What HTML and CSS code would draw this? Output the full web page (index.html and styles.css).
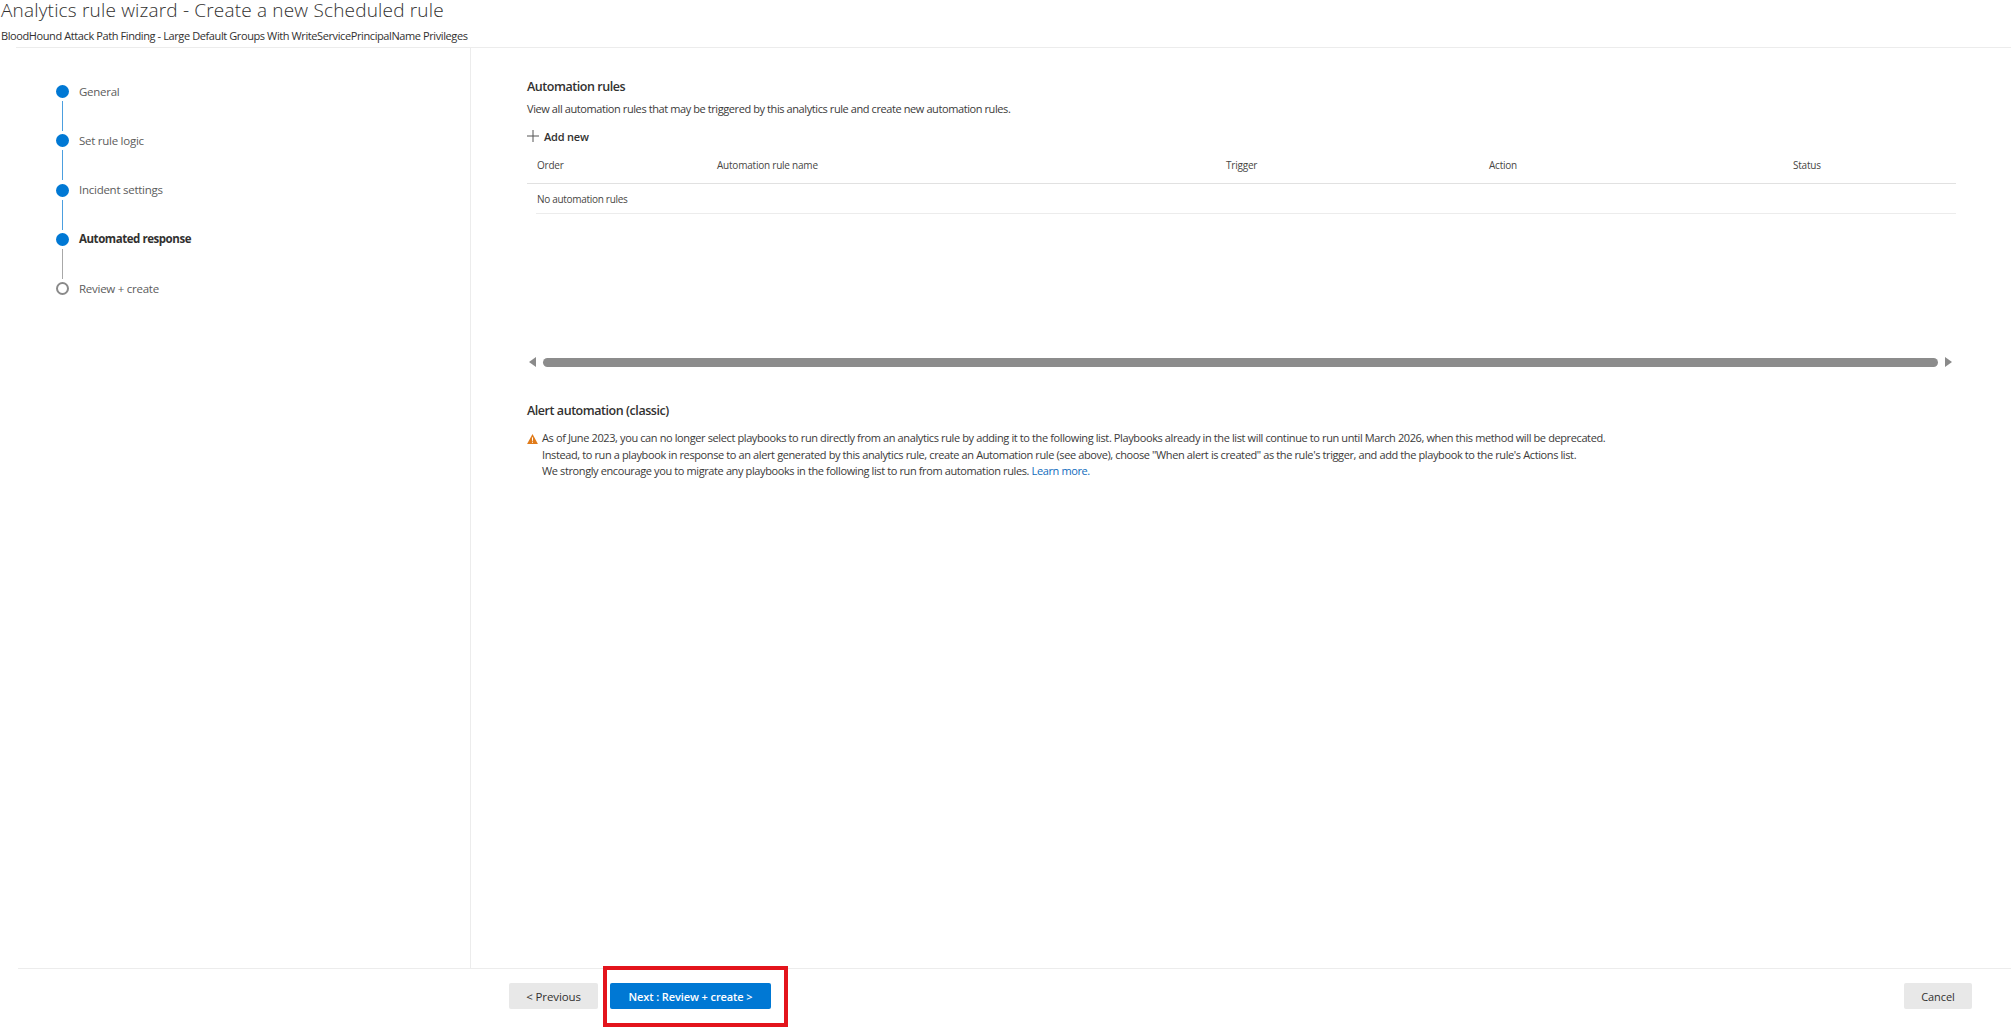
FILE: index.html
```html
<!DOCTYPE html>
<html lang="en">
<head>
    <meta charset="UTF-8">
    <title>Analytics rule wizard</title>
    <link rel="stylesheet" href="styles.css">
</head>
<body>
<header class="page-head">
    <h1 class="page-title">Analytics rule wizard - Create a new Scheduled rule</h1>
    <div class="page-sub">BloodHound Attack Path Finding - Large Default Groups With WriteServicePrincipalName Privileges</div>
</header>

<div class="wizard">
    <nav class="steps">
        <div class="step done"><span class="dot"></span><span class="step-label">General</span></div>
        <div class="step done"><span class="dot"></span><span class="step-label">Set rule logic</span></div>
        <div class="step done"><span class="dot"></span><span class="step-label">Incident settings</span></div>
        <div class="step current"><span class="dot"></span><span class="step-label">Automated response</span></div>
        <div class="step todo"><span class="dot"></span><span class="step-label">Review + create</span></div>
    </nav>

    <main class="content">
        <h2 class="section-title">Automation rules</h2>
        <p class="section-desc">View all automation rules that may be triggered by this analytics rule and create new automation rules.</p>
        <div class="add-new">
            <svg class="plus-icon" width="12" height="12" viewBox="0 0 12 12"><path d="M6 0v12M0 6h12" stroke="#555" stroke-width="1" fill="none"/></svg>
            <span>Add new</span>
        </div>

        <div class="rules-table">
            <div class="table-head">
                <span class="col-order">Order</span>
                <span class="col-name">Automation rule name</span>
                <span class="col-trigger">Trigger</span>
                <span class="col-action">Action</span>
                <span class="col-status">Status</span>
            </div>
            <div class="table-empty">No automation rules</div>
        </div>

        <div class="scroll-row">
            <svg width="8" height="10" viewBox="0 0 8 10"><path d="M7 0v10L0 5z" fill="#8a8a8a"/></svg>
            <div class="scroll-thumb"></div>
            <svg width="8" height="10" viewBox="0 0 8 10"><path d="M1 0v10l7-5z" fill="#8a8a8a"/></svg>
        </div>

        <h2 class="section-title classic-title">Alert automation (classic)</h2>
        <div class="notice">
            <svg class="warn-icon" width="11" height="10" viewBox="0 0 13 12"><path d="M6.5 0L13 12H0z" fill="#e07b1a"/><path d="M6.5 4v4.2M6.5 9.2v1.3" stroke="#fff" stroke-width="1.2"/></svg>
            <div class="notice-text">
                <div>As of June 2023, you can no longer select playbooks to run directly from an analytics rule by adding it to the following list. Playbooks already in the list will continue to run until March 2026, when this method will be deprecated.</div>
                <div>Instead, to run a playbook in response to an alert generated by this analytics rule, create an Automation rule (see above), choose "When alert is created" as the rule's trigger, and add the playbook to the rule's Actions list.</div>
                <div>We strongly encourage you to migrate any playbooks in the following list to run from automation rules. <a class="learn-link" href="#">Learn more.</a></div>
            </div>
        </div>
    </main>
</div>

<footer class="page-foot">
    <button class="btn btn-grey btn-prev">&lt; Previous</button>
    <button class="btn btn-blue">Next : Review + create &gt;</button>
    <button class="btn btn-grey btn-cancel">Cancel</button>
</footer>

<div class="red-box"></div>
</body>
</html>
```

FILE: styles.css
```css
* {
    box-sizing: border-box;
}
html, body {
    height: 100%;
}
body {
    margin: 0;
    height: 1028px;
    overflow: hidden;
    display: flex;
    flex-direction: column;
    position: relative;
    background: #fff;
    color: #323130;
    font-family: "Open Sans", "Noto Sans", Arial, sans-serif;
    font-size: 11px;
}

/* top title */
.page-head {
    height: 48px;
    padding-left: 1px;
    position: relative;
}
.page-head::after {
    content: "";
    position: absolute;
    left: 16px;
    right: 0;
    bottom: 0;
    border-bottom: 1px solid #ececec;
}
.page-title {
    margin: 0;
    font-size: 19px;
    font-weight: 300;
    line-height: 20px;
    height: 28px;
    letter-spacing: 0.18px;
}
.page-sub {
    font-size: 11px;
    line-height: 16px;
    letter-spacing: -0.4px;
}

.wizard {
    flex: 1;
    display: flex;
    min-height: 0;
}

/* left steps */
.steps {
    width: 471px;
    flex: none;
    border-right: 1px solid #ececec;
    padding: 37px 0 0 56px;
}
.step {
    display: flex;
    align-items: center;
    gap: 10px;
    height: 13px;
    margin-bottom: 36.3px;
    position: relative;
}
.dot {
    width: 13px;
    height: 13px;
    border-radius: 50%;
    background: #0078d4;
    flex: none;
}
.step-label {
    font-size: 11.5px;
    line-height: 12px;
    color: #5c5c5c;
    letter-spacing: -0.26px;
}
.step:not(:last-child)::after {
    content: "";
    position: absolute;
    left: 6px;
    top: 16px;
    height: 30px;
    border-left: 1px solid #4c9fdf;
}
.current::after {
    border-left-color: #a8a8a8 !important;
}
.current .step-label {
    font-weight: 700;
    color: #323130;
    letter-spacing: -0.45px;
}
.todo .dot {
    background: #fff;
    border: 2px solid #8a8a8a;
}

/* right side */
.content {
    flex: 1;
    padding: 31px 55px 0 56px;
    min-width: 0;
}
.section-title {
    margin: 0;
    font-size: 12.5px;
    font-weight: 600;
    line-height: 16px;
    letter-spacing: -0.45px;
}
.section-desc {
    margin: 6px 0 0;
    line-height: 16px;
    color: #3b3a39;
    letter-spacing: -0.41px;
}
.add-new {
    display: flex;
    align-items: center;
    gap: 5px;
    margin-top: 10px;
    height: 18px;
    font-weight: 600;
    letter-spacing: -0.2px;
    color: #323130;
}

.rules-table {
    margin-top: 2px;
    height: 211px;
    font-size: 10px;
}
.table-head {
    display: grid;
    grid-template-columns: 180px 509px 263px 304px 1fr;
    padding-left: 10px;
    height: 37px;
    align-items: center;
    border-bottom: 1px solid #e1e1e1;
    color: #484644;
    letter-spacing: -0.22px;
}
.table-empty {
    margin-left: 9px;
    padding-left: 1px;
    height: 30px;
    line-height: 30px;
    border-bottom: 1px solid #ececec;
    color: #484644;
    letter-spacing: -0.3px;
}

.scroll-row {
    display: flex;
    align-items: center;
    gap: 6px;
    height: 10px;
    margin: -1px 0 0 2px;
    width: 1423px;
}
.scroll-thumb {
    flex: 1;
    height: 9px;
    border-radius: 5px;
    background: #8c8c8c;
}

.classic-title {
    margin-top: 36px;
}
.notice {
    display: flex;
    gap: 4px;
    margin-top: 11px;
}
.warn-icon {
    margin-top: 4px;
    flex: none;
}
.notice-text {
    line-height: 16.5px;
    color: #3b3a39;
    letter-spacing: -0.385px;
    white-space: nowrap;
}
.learn-link {
    color: #0f6cbd;
    text-decoration: none;
}

/* bottom buttons */
.page-foot {
    height: 60px;
    flex: none;
    display: flex;
    align-items: flex-start;
    padding: 15px 39px 0 509px;
    gap: 12px;
    position: relative;
}
.page-foot::before {
    content: "";
    position: absolute;
    left: 18px;
    right: 0;
    top: 0;
    border-top: 1px solid #ececec;
}
.btn {
    height: 26px;
    border: none;
    border-radius: 2px;
    font-family: inherit;
    font-size: 11px;
    padding: 0;
    letter-spacing: -0.1px;
}
.btn-grey {
    background: #e8e8e8;
    color: #323130;
}
.btn-prev {
    width: 89px;
    font-size: 11.5px;
    letter-spacing: -0.1px;
}
.btn-blue {
    width: 161px;
    background: #0078d4;
    color: #fff;
    font-weight: 600;
}
.btn-cancel {
    width: 68px;
    margin-left: auto;
}

/* red annotation round the next button */
.red-box {
    position: absolute;
    left: 603px;
    top: 966px;
    width: 185px;
    height: 61px;
    border: 4px solid #e3141c;
}
```
